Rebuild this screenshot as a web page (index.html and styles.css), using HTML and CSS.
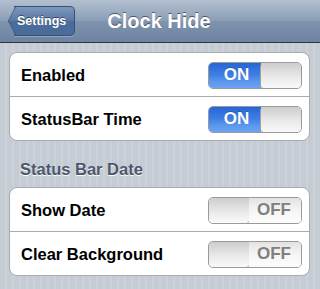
FILE: index.html
```html
<!DOCTYPE html>
<html>
<head>
<meta charset="utf-8">
<link rel="stylesheet" href="styles.css">
</head>
<body>
<header class="navbar">
  <div class="back"><span>Settings</span></div>
  <h1 class="title">Clock Hide</h1>
</header>
<main class="content">
  <ul class="group">
    <li class="row"><span class="label">Enabled</span><span class="switch on"><span class="state">ON</span><span class="knob"></span></span></li>
    <li class="row"><span class="label">StatusBar Time</span><span class="switch on"><span class="state">ON</span><span class="knob"></span></span></li>
  </ul>
  <h2 class="section">Status Bar Date</h2>
  <ul class="group">
    <li class="row"><span class="label">Show Date</span><span class="switch off"><span class="knob"></span><span class="state">OFF</span></span></li>
    <li class="row"><span class="label">Clear Background</span><span class="switch off"><span class="knob"></span><span class="state">OFF</span></span></li>
  </ul>
</main>
</body>
</html>
```

FILE: styles.css
```css
* { box-sizing: border-box; }
html, body { margin: 0; padding: 0; }
body {
  width: 320px;
  height: 289px;
  overflow: hidden;
  font-family: "Liberation Sans", Arial, sans-serif;
  background-color: #c5ccd4;
  background-image: repeating-linear-gradient(90deg, #c5ccd4 0, #c5ccd4 5px, #cbd2d9 5px, #cbd2d9 7px);
}
.navbar {
  height: 43px;
  border-bottom: 1px solid #2d3642;
  background: linear-gradient(#b3c0d1 0%, #8a9db6 50%, #7f93ae 51%, #6d83a1 100%);
  display: flex;
  align-items: center;
  position: relative;
  padding-left: 14px;
}
.back {
  position: relative;
  height: 30px;
  margin-top: -1px;
  padding: 0 8px 0 3px;
  display: flex;
  align-items: center;
  border: 1px solid #375073;
  border-left: none;
  border-radius: 0 5px 5px 0;
  background: linear-gradient(#7e98bc 0%, #5877a2 50%, #4a6c9b 51%, #4a6c99 100%);
  box-shadow: 0 1px 0 rgba(255,255,255,0.25);
  color: #fff;
  font-weight: bold;
  font-size: 12.5px;
  text-shadow: 0 -1px 0 rgba(0,0,0,0.45);
}
.back::before {
  content: "";
  position: absolute;
  left: -9px;
  top: 3px;
  width: 21px;
  height: 21px;
  transform: scaleX(0.52) rotate(45deg);
  transform-origin: center;
  border-left: 1px solid #375073;
  border-bottom: 1px solid #375073;
  background: linear-gradient(135deg, #7e98bc 0%, #5877a2 50%, #4a6c9b 51%, #4a6c99 100%);
  z-index: 0;
}
.back span { position: relative; z-index: 1; }
.title {
  position: absolute;
  left: 0;
  right: 0;
  top: 0;
  margin: 0;
  text-align: center;
  line-height: 42px;
  font-size: 20px;
  font-weight: bold;
  color: #fff;
  text-shadow: 0 -1px 0 rgba(0,0,0,0.5);
  padding-right: 2px;
  pointer-events: none;
}
.content { padding: 9px 10px 0 9px; }
.group {
  list-style: none;
  margin: 0;
  padding: 0;
  background: #fff;
  border: 1px solid #a9abae;
  border-radius: 8px;
}
.row {
  height: 44px;
  display: flex;
  align-items: center;
  justify-content: space-between;
  padding: 1px 7px 0 11px;
  border-bottom: 1px solid #a9abae;
}
.row:last-child { border-bottom: none; height: 43px; }
.label {
  font-size: 16.5px;
  font-weight: bold;
  color: #000;
}
.section {
  margin: 0;
  padding: 19px 0 0 11px;
  height: 46px;
  font-size: 16.5px;
  font-weight: bold;
  color: #4c566c;
  text-shadow: 0 1px 0 #fff;
}
.switch {
  width: 94px;
  height: 27px;
  border-radius: 5px;
  border: 1px solid #9a9a9a;
  display: flex;
  overflow: hidden;
}
.switch .state {
  flex: 1;
  display: flex;
  align-items: center;
  justify-content: center;
  font-size: 17px;
  font-weight: bold;
}
.switch.on .state {
  color: #fff;
  background: linear-gradient(#2566d6 0%, #3d7de3 45%, #5c98ec 75%, #6aa4f2 100%);
  text-shadow: 0 -1px 0 rgba(0,0,0,0.2);
  padding-left: 3px;
}
.switch.off .state {
  color: #808080;
  background: linear-gradient(#e2e2e2 0%, #f4f4f4 45%, #fdfdfd 100%);
  padding-right: 2px;
}
.switch .knob {
  width: 40px;
  background: linear-gradient(#cdcdcd 0%, #e9e9e9 55%, #fafafa 100%);
  border-radius: 4px;
  box-shadow: 0 0 0 1px #a0a0a0;
}
```
